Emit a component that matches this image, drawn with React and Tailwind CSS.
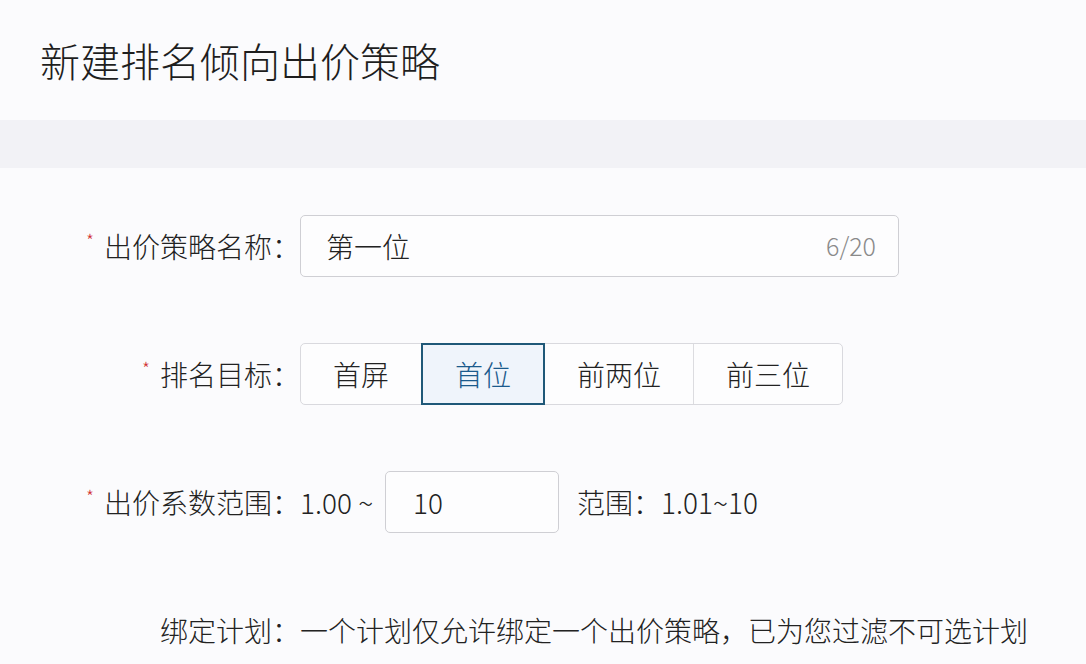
import React, { useState } from 'react';

const font = { fontFamily: '"Noto Sans CJK SC", "Noto Sans", sans-serif' };

const Required = () => (
    <span className="text-[#d0302f] text-[18px] leading-none mr-[10px] relative -top-[6px]">*</span>
);

const Row = ({ label, required, children }) => (
    <div className="flex items-center h-[62px]">
        <div className="w-[300px] shrink-0 flex items-center justify-end text-[28px] text-[#222]">
            {required && <Required />}
            <span>{label}</span>
        </div>
        <div className="flex items-center">{children}</div>
    </div>
);

const App = () => {
    const [target, setTarget] = useState('首位');
    const targets = ['首屏', '首位', '前两位', '前三位'];

    return (
        <div className="w-[1086px] h-[664px] bg-[#fbfbfd] overflow-hidden font-light" style={font}>
            <div className="h-[120px] flex items-center pl-[40px]">
                <h1 className="text-[40px] text-[#1e1e1e] font-light leading-none">新建排名倾向出价策略</h1>
            </div>
            <div className="h-[48px] bg-[#f2f2f6]" />

            <div className="pt-[47px] flex flex-col gap-[66px]">
                <Row label="出价策略名称：" required>
                    <div className="w-[599px] h-[62px] border border-[#cfcfd4] rounded-[5px] bg-[#fdfdfe] flex items-center justify-between pl-[25px] pr-[22px]">
                        <span className="text-[28px] text-[#222]">第一位</span>
                        <span className="text-[25px] text-[#8a8a8a]">6/20</span>
                    </div>
                </Row>

                <Row label="排名目标：" required>
                    <div className="flex h-[62px] border border-[#d9d9de] rounded-[5px] bg-[#fdfdfe]">
                        {targets.map((t, i) => (
                            <button
                                key={t}
                                onClick={() => setTarget(t)}
                                className={
                                    target === t
                                        ? 'px-[32px] text-[28px] font-light text-[#1b5a8c] bg-[#eff4fb] border-2 border-[#1f5878] -my-px'
                                        : `px-[32px] text-[28px] font-light text-[#222] ${i > 0 && targets[i - 1] !== target ? 'border-l border-[#dcdce0]' : ''}`
                                }
                            >
                                {t}
                            </button>
                        ))}
                    </div>
                </Row>

                <Row label="出价系数范围：" required>
                    <span className="text-[28px] text-[#222]">1.00 ~</span>
                    <div className="ml-[12px] w-[174px] h-[62px] border border-[#cfcfd4] rounded-[5px] bg-[#fdfdfe] flex items-center pl-[27px]">
                        <span className="text-[28px] text-[#222]">10</span>
                    </div>
                    <span className="ml-[18px] text-[28px] text-[#222]">范围：1.01~10</span>
                </Row>

                <Row label="绑定计划：">
                    <span className="text-[28px] text-[#222] whitespace-nowrap">一个计划仅允许绑定一个出价策略，已为您过滤不可选计划</span>
                </Row>
            </div>
        </div>
    );
};

export default App;
